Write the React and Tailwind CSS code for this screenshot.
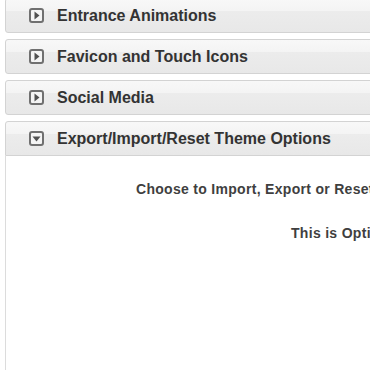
import React from "react";

function Icon({ open }) {
  return (
    <div className="w-[15px] h-[15px] border-2 border-[#707070] rounded-[3px] flex items-center justify-center bg-[#f4f4f4] shrink-0">
      <svg width="9" height="9" viewBox="0 0 9 9">
        {open ? (
          <polygon points="0.5,2.5 8.5,2.5 4.5,7.5" fill="#505050" />
        ) : (
          <polygon points="2.5,0.5 7.5,4.5 2.5,8.5" fill="#505050" />
        )}
      </svg>
    </div>
  );
}

function Bar({ title, open, extra = "" }) {
  return (
    <div
      className={`h-[35px] ml-[5px] w-[380px] border border-[#d3d3d3] rounded-[3px] bg-[linear-gradient(#f8f8f8_0%,#f4f4f4_35%,#ececec_36%,#e8e8e8_100%)] flex items-center pl-[23px] gap-[13px] ${extra}`}
    >
      <Icon open={open} />
      <span className="text-[16px] font-bold text-[#333] whitespace-nowrap">{title}</span>
    </div>
  );
}

export default function App() {
  return (
    <div className="w-[370px] h-[370px] overflow-hidden bg-white font-['Liberation_Sans',Arial,sans-serif] relative">
      <div className="flex flex-col gap-[6px] -mt-[2px]">
        <Bar title="Entrance Animations" />
        <Bar title="Favicon and Touch Icons" />
        <Bar title="Social Media" />
        <div>
          <Bar title="Export/Import/Reset Theme Options" open extra="rounded-b-none" />
          <div className="ml-[5px] w-[380px] h-[240px] border-l border-[#dcdcdc] bg-white">
            <div className="pl-[130px] pt-[25px] text-[14px] leading-[16px] tracking-[0.3px] font-bold text-[#3f3f3f] whitespace-nowrap">
              Choose to Import, Export or Reset
            </div>
            <div className="pl-[285px] pt-[28px] text-[14px] leading-[16px] tracking-[0.3px] font-bold text-[#3f3f3f] whitespace-nowrap">
              This is Options
            </div>
          </div>
        </div>
      </div>
    </div>
  );
}
